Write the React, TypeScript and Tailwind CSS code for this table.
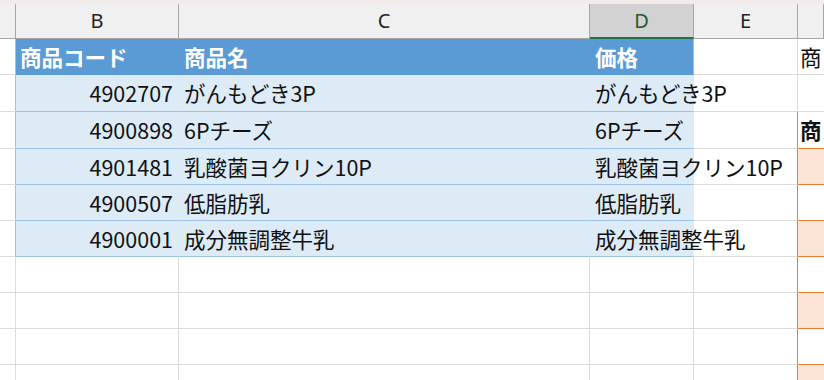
import clsx from 'clsx'

const cols = 'grid grid-cols-[16px_163px_411px_104px_104px_1fr]'

type Item = {
  height: string
  code?: string
  name?: string
  price?: string
  inTable: boolean
  isHead?: boolean
  side: 'plain' | 'none' | 'head' | 'peach' | 'white'
}

const rows: Item[] = [
  { height: 'h-[36px]', code: '商品コード', name: '商品名', price: '価格', inTable: true, isHead: true, side: 'plain' },
  { height: 'h-[37px]', code: '4902707', name: 'がんもどき3P', price: 'がんもどき3P', inTable: true, side: 'none' },
  { height: 'h-[37px]', code: '4900898', name: '6Pチーズ', price: '6Pチーズ', inTable: true, side: 'head' },
  { height: 'h-[36px]', code: '4901481', name: '乳酸菌ヨクリン10P', price: '乳酸菌ヨクリン10P', inTable: true, side: 'peach' },
  { height: 'h-[36px]', code: '4900507', name: '低脂肪乳', price: '低脂肪乳', inTable: true, side: 'white' },
  { height: 'h-[36px]', code: '4900001', name: '成分無調整牛乳', price: '成分無調整牛乳', inTable: true, side: 'peach' },
  { height: 'h-[36px]', inTable: false, side: 'white' },
  { height: 'h-[36px]', inTable: false, side: 'peach' },
  { height: 'h-[36px]', inTable: false, side: 'white' },
  { height: 'h-[36px]', inTable: false, side: 'peach' }
]

const letters = ['B', 'C', 'D', 'E', '']

function ColumnHeader() {
  return (
    <div className={clsx(cols, 'h-[35px]')}>
      <div className="border-r border-b border-[#a6a6a6] bg-[#f0f0f0]" />
      {letters.map((letter, index) => (
        <div
          key={index}
          className={clsx(
            'flex items-center justify-center border-r border-[#a6a6a6] font-["Noto_Sans",sans-serif] text-[20px]',
            letter === 'D'
              ? 'bg-[#d2d2d2] border-b-2 border-b-[#217346] text-[#1d5b35]'
              : 'bg-[#f0f0f0] border-b text-[#222222]'
          )}
        >
          {letter}
        </div>
      ))}
    </div>
  )
}

function SheetRow({ row }: { row: Item }) {
  const tableCell = row.isHead
    ? 'bg-[#5b9bd5] border-b border-[#5b9bd5] text-white font-bold'
    : 'bg-[#ddebf7] border-b border-b-[#9bc2e6] text-[#111111]'

  const plainCell = 'border-r border-b border-[#dadada]'

  return (
    <div className={clsx(cols, row.height)}>
      <div
        className={clsx(
          'border-b border-b-[#dadada] border-r',
          row.inTable ? 'border-r-[#9bc2e6]' : 'border-r-[#dadada]'
        )}
      />

      {row.inTable ? (
        <>
          <div
            className={clsx(
              'flex items-center whitespace-nowrap border-r',
              tableCell,
              row.isHead ? 'pl-[4px] border-r-[#5b9bd5]' : 'justify-end pr-[5px] border-r-[#ddebf7]'
            )}
          >
            {row.code}
          </div>
          <div
            className={clsx(
              'flex items-center whitespace-nowrap pl-[5px] border-r',
              tableCell,
              row.isHead ? 'border-r-[#5b9bd5]' : 'border-r-[#ddebf7]'
            )}
          >
            {row.name}
          </div>
          <div
            className={clsx(
              'flex items-center whitespace-nowrap overflow-visible pl-[5px] border-r',
              tableCell,
              row.isHead ? 'border-r-[#9bc2e6]' : 'border-r-[#ddebf7]'
            )}
          >
            {row.price}
          </div>
        </>
      ) : (
        <>
          <div className={plainCell} />
          <div className={plainCell} />
          <div className={plainCell} />
        </>
      )}

      <div
        className={clsx(
          'border-r border-b border-b-[#dadada]',
          row.side === 'plain' || row.side === 'none' ? 'border-r-[#dadada]' : 'border-r-[#ed7d31]'
        )}
      />

      <div
        className={clsx(
          'flex items-center whitespace-nowrap overflow-hidden pl-[2px] text-[#111111] border-b',
          row.side === 'plain' || row.side === 'none' ? 'border-b-[#dadada]' : 'border-b-[#ed7d31]',
          row.side === 'peach' && 'bg-[#fce4d6]',
          row.side === 'head' && 'font-bold'
        )}
      >
        {row.side === 'plain' || row.side === 'head' ? '商' : ''}
      </div>
    </div>
  )
}

export default function App() {
  return (
    <div className="w-[824px] h-[380px] overflow-hidden bg-white font-['Noto_Sans_CJK_JP',sans-serif] text-[21.5px] leading-none">
      <div className="h-[4px] bg-[#f3ebe9]" />
      <ColumnHeader />
      {rows.map((row, index) => (
        <SheetRow key={index} row={row} />
      ))}
    </div>
  )
}
